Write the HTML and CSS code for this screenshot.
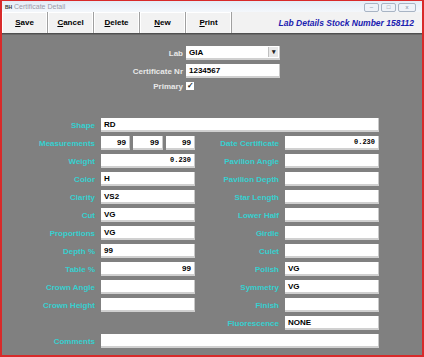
FILE: index.html
```html
<!DOCTYPE html>
<html lang="en">
<head>
    <meta charset="UTF-8">
    <title>Certificate Detail</title>
    <link rel="stylesheet" href="styles.css">
</head>
<body>
    <div class="window">
        <!-- Title bar -->
        <div class="titlebar">
            <span class="app-icon">BH</span>
            <span class="title-text">Certificate Detail</span>
            <div class="win-buttons">
                <span class="win-btn">&#8211;</span>
                <span class="win-btn">&#9633;</span>
                <span class="win-btn close">x</span>
            </div>
        </div>

        <!-- Toolbar -->
        <div class="toolbar">
            <button class="tool-btn"><u>S</u>ave</button>
            <button class="tool-btn"><u>C</u>ancel</button>
            <button class="tool-btn"><u>D</u>elete</button>
            <button class="tool-btn"><u>N</u>ew</button>
            <button class="tool-btn"><u>P</u>rint</button>
            <div class="toolbar-title">Lab Details Stock Number 158112</div>
        </div>

        <!-- Form body -->
        <div class="form-body">
            <div class="head-grid">
                <label class="head-label">Lab</label>
                <div class="field select-field">GIA<span class="drop-btn">&#9662;</span></div>
                <label class="head-label">Certificate Nr</label>
                <div class="field">1234567</div>
                <label class="head-label">Primary</label>
                <div class="check-cell"><span class="checkbox">&#10003;</span></div>
            </div>

            <div class="detail-grid">
                <label class="lbl">Shape</label>
                <div class="field wide">RD</div>

                <label class="lbl">Measurements</label>
                <div class="measures">
                    <div class="field num">99</div>
                    <div class="field num">99</div>
                    <div class="field num">99</div>
                </div>
                <label class="lbl">Date Certificate</label>
                <div class="field num mono">0.230</div>

                <label class="lbl">Weight</label>
                <div class="field num mono">0.230</div>
                <label class="lbl">Pavilion Angle</label>
                <div class="field"></div>

                <label class="lbl">Color</label>
                <div class="field">H</div>
                <label class="lbl">Pavilion Depth</label>
                <div class="field"></div>

                <label class="lbl">Clarity</label>
                <div class="field">VS2</div>
                <label class="lbl">Star Length</label>
                <div class="field"></div>

                <label class="lbl">Cut</label>
                <div class="field">VG</div>
                <label class="lbl">Lower Half</label>
                <div class="field"></div>

                <label class="lbl">Proportions</label>
                <div class="field">VG</div>
                <label class="lbl">Girdle</label>
                <div class="field"></div>

                <label class="lbl">Depth %</label>
                <div class="field">99</div>
                <label class="lbl">Culet</label>
                <div class="field"></div>

                <label class="lbl">Table %</label>
                <div class="field num">99</div>
                <label class="lbl">Polish</label>
                <div class="field">VG</div>

                <label class="lbl">Crown Angle</label>
                <div class="field"></div>
                <label class="lbl">Symmetry</label>
                <div class="field">VG</div>

                <label class="lbl">Crown Height</label>
                <div class="field"></div>
                <label class="lbl">Finish</label>
                <div class="field"></div>

                <span></span>
                <span></span>
                <label class="lbl">Fluorescence</label>
                <div class="field">NONE</div>

                <label class="lbl">Comments</label>
                <div class="field wide"></div>
            </div>
        </div>
    </div>
</body>
</html>
```

FILE: styles.css
```css
body {
    margin: 0;
    padding: 0;
    font-family: "Liberation Sans", Arial, sans-serif;
    background-color: #ffffff;
}

.window {
    width: 424px;
    height: 357px;
    box-sizing: border-box;
    border: 2px solid #d82a2a;
    border-top: 1px solid #d82a2a;
    display: flex;
    flex-direction: column;
    background-color: #808080;
    overflow: hidden;
}

/* Title bar */
.titlebar {
    height: 11px;
    display: flex;
    align-items: center;
    background: linear-gradient(to bottom, #e4ecf6, #f4f7fb);
    padding-left: 3px;
}

.app-icon {
    font-size: 5px;
    font-weight: bold;
    color: #333;
    width: 9px;
}

.title-text {
    font-size: 7px;
    color: #9a9aa8;
}

.win-buttons {
    margin-left: auto;
    display: flex;
    gap: 2px;
    margin-right: 6px;
    margin-top: 2px;
}

.win-btn {
    width: 13px;
    height: 7px;
    border: 1px solid #a8b4c4;
    border-radius: 2px;
    font-size: 6px;
    line-height: 7px;
    text-align: center;
    color: #7a8698;
    background: #eef2f8;
}

.win-btn.close {
    width: 16px;
}

/* Toolbar */
.toolbar {
    height: 21px;
    display: flex;
    align-items: stretch;
    background-color: #f2f2f2;
    border-bottom: 1px solid #505050;
}

.tool-btn {
    width: 46px;
    margin: 0;
    padding: 0;
    border: none;
    border-right: 1px solid #a0a0a0;
    box-shadow: inset -1px 0 0 #ffffff, inset 1px 1px 0 #ffffff;
    background-color: #f2f2f2;
    font-family: "Liberation Sans", Arial, sans-serif;
    font-size: 8px;
    font-weight: bold;
    color: #000;
}

.toolbar-title {
    margin-left: auto;
    margin-right: 8px;
    align-self: center;
    font-size: 8.5px;
    font-weight: bold;
    font-style: italic;
    color: #1a20b0;
}

/* Form body */
.form-body {
    flex: 1;
    padding-top: 11px;
    border-top: 1px solid #6a6a6a;
}

.head-grid {
    display: grid;
    grid-template-columns: 184px 94px;
    grid-template-rows: 14px 14px 8px;
    row-gap: 4px;
    align-items: center;
}

.head-label {
    text-align: right;
    padding-right: 3px;
    font-size: 8px;
    font-weight: bold;
    color: #e8e8e8;
}

.detail-grid {
    margin-top: 28px;
    display: grid;
    grid-template-columns: 99px 94px 90px 94px;
    grid-auto-rows: 14px;
    row-gap: 4px;
    align-items: center;
}

.lbl {
    text-align: right;
    padding-right: 6px;
    font-size: 8px;
    font-weight: bold;
    color: #36d0d0;
    white-space: nowrap;
}

.field {
    height: 14px;
    box-sizing: border-box;
    background-color: #ffffff;
    border-right: 1px solid #c8c8c8;
    border-bottom: 2px solid #d0d0d0;
    padding: 0 3px;
    font-size: 8px;
    font-weight: bold;
    line-height: 13px;
    color: #000;
    white-space: nowrap;
}

.field.wide {
    grid-column: 2 / 5;
}

.field.num {
    text-align: right;
}

.field.mono {
    font-family: "Liberation Mono", "Courier New", monospace;
    font-size: 7px;
}

.measures {
    display: grid;
    grid-template-columns: 29px 30px 29px;
    column-gap: 3px;
}

.select-field {
    position: relative;
    padding-right: 12px;
}

.drop-btn {
    position: absolute;
    right: 1px;
    top: 1px;
    width: 9px;
    height: 10px;
    background-color: #e8e8e8;
    border-left: 1px solid #c0c0c0;
    font-size: 7px;
    line-height: 10px;
    text-align: center;
    color: #222;
}

.check-cell {
    display: flex;
    align-items: center;
}

.checkbox {
    width: 8px;
    height: 8px;
    background-color: #ffffff;
    font-size: 8px;
    line-height: 8px;
    text-align: center;
    font-weight: bold;
    color: #222;
}
```
